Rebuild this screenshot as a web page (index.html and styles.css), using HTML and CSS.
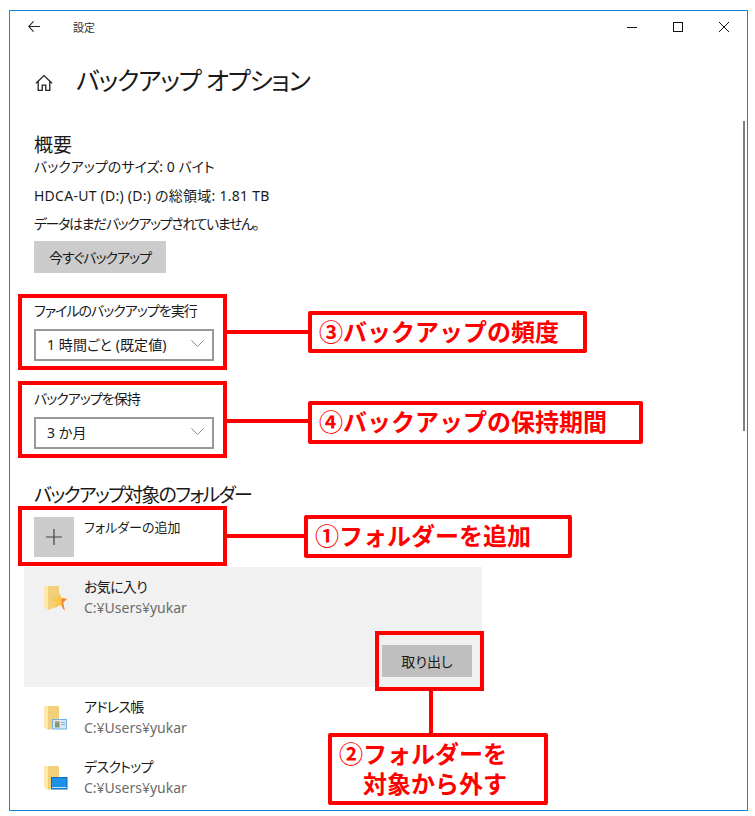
FILE: index.html
```html
<!DOCTYPE html>
<html lang="ja">
<head>
  <meta charset="UTF-8" />
  <title>バックアップ オプション</title>
  <link rel="stylesheet" href="styles.css">
</head>
<body>
  <div class="window">
    <!-- Title bar -->
    <div class="titlebar">
      <svg class="back-icon" width="12" height="11" viewBox="0 0 12 11"><path d="M5.500 .4 .8 5.500l4.700 5.100M1 5.500h11" fill="none" stroke="#222" stroke-width="1.1"/></svg>
      <span class="app-name">設定</span>
      <div class="win-controls">
        <svg width="12" height="12" viewBox="0 0 12 12"><path d="M1 6.500h10" stroke="#111" stroke-width="1"/></svg>
        <svg width="12" height="12" viewBox="0 0 12 12"><rect x="1.500" y="1.500" width="9" height="9" fill="none" stroke="#111" stroke-width="1"/></svg>
        <svg width="12" height="12" viewBox="0 0 12 12"><path d="M1 1l10 10M11 1 1 11" stroke="#111" stroke-width="1"/></svg>
      </div>
    </div>

    <div class="page-head">
      <svg class="home-icon" width="18" height="18" viewBox="0 0 18 18"><path d="M1 9.200 9 1.600l8 7.600M3.200 7.400v9h4v-5.200h3.600v5.200h4v-9" fill="none" stroke="#222" stroke-width="1.300"/></svg>
      <h1>バックアップ オプション</h1>
    </div>

    <div class="scrollbar"></div>

    <div class="content">
      <h2 class="overview-title">概要</h2>
      <p class="info">バックアップのサイズ: 0 バイト</p>
      <p class="info info-wide">HDCA-UT (D:) (D:) の総領域: 1.81 TB</p>
      <p class="info info-tight">データはまだバックアップされていません。</p>
      <button class="btn btn-now">今すぐバックアップ</button>

      <label class="field-label first">ファイルのバックアップを実行</label>
      <div class="select">
        <span>1 時間ごと (既定値)</span>
        <svg width="13" height="7" viewBox="0 0 13 7"><path d="M.4.4 6.500 6.400 12.600.4" fill="none" stroke="#888" stroke-width="1"/></svg>
      </div>

      <label class="field-label second">バックアップを保持</label>
      <div class="select">
        <span>3 か月</span>
        <svg width="13" height="7" viewBox="0 0 13 7"><path d="M.4.4 6.500 6.400 12.600.4" fill="none" stroke="#888" stroke-width="1"/></svg>
      </div>

      <h2 class="folders-title">バックアップ対象のフォルダー</h2>
      <div class="add-row">
        <div class="add-square">
          <svg width="16" height="16" viewBox="0 0 16 16"><path d="M8 0v16M0 8h16" stroke="#444" stroke-width="1.200"/></svg>
        </div>
        <span class="add-text">フォルダーの追加</span>
      </div>

      <div class="folder selected">
        <div class="folder-main">
          <svg class="folder-icon" width="26" height="28" viewBox="0 0 26 28">
            <path d="M0 1h14l1 1v19L4 25 0 22z" fill="#f2cf78"/>
            <path d="M0 1h4v24l-4-3z" fill="#fde9ad"/>
            <path d="M15.500 8l2.300 5.200 5.200.6-3.900 3.600 1.100 5.400-4.700-2.700-4.700 2.700 1.100-5.400L8 13.800l5.200-.6z" fill="#fcc746"/>
            <path d="M17.800 13.200l5.200.6-3.900 3.600 1.100 5.400.8 3-2.500-2.500-1-5.700z" fill="#ee8240"/>
          </svg>
          <div class="folder-text">
            <div class="folder-name">お気に入り</div>
            <div class="folder-path">C:¥Users¥yukar</div>
          </div>
        </div>
        <button class="btn btn-remove">取り出し</button>
      </div>

      <div class="folder">
        <div class="folder-main">
          <svg class="folder-icon" width="26" height="28" viewBox="0 0 26 28">
            <path d="M0 1h14l1 1v19L4 25 0 22z" fill="#f2cf78"/>
            <path d="M0 1h4v24l-4-3z" fill="#fde9ad"/>
            <rect x="8.500" y="14.500" width="14" height="9.500" fill="#d8e8f4" stroke="#6fb0de"/>
            <rect x="11" y="16.500" width="4.500" height="6" fill="#7f9a70"/>
            <circle cx="13.200" cy="17.800" r="1.400" fill="#c98a5a"/>
            <path d="M17 17.500h4M17 19.500h4" stroke="#8db6d6"/>
          </svg>
          <div class="folder-text">
            <div class="folder-name">アドレス帳</div>
            <div class="folder-path">C:¥Users¥yukar</div>
          </div>
        </div>
      </div>

      <div class="folder">
        <div class="folder-main">
          <svg class="folder-icon" width="26" height="28" viewBox="0 0 26 28">
            <path d="M0 1h14l1 1v19L4 25 0 22z" fill="#f2cf78"/>
            <path d="M0 1h4v24l-4-3z" fill="#fde9ad"/>
            <rect x="7.500" y="12.500" width="15.500" height="11.500" fill="#1e90e8" stroke="#0f6cb8"/>
            <path d="M8 22.500h14.500" stroke="#bfe0f8"/>
          </svg>
          <div class="folder-text">
            <div class="folder-name">デスクトップ</div>
            <div class="folder-path">C:¥Users¥yukar</div>
          </div>
        </div>
      </div>
    </div>
  </div>

  <!-- Red annotations drawn over the screenshot -->
  <div class="mark mark-freq"></div>
  <div class="mark mark-keep"></div>
  <div class="mark mark-add"></div>
  <div class="mark mark-remove"></div>

  <div class="wire wire-freq"></div>
  <div class="wire wire-keep"></div>
  <div class="wire wire-add"></div>
  <div class="wire wire-remove"></div>

  <div class="note note-freq">③バックアップの頻度</div>
  <div class="note note-keep">④バックアップの保持期間</div>
  <div class="note note-add">①フォルダーを追加</div>
  <div class="note note-remove">②フォルダーを<br>&emsp;対象から外す</div>
</body>
</html>
```

FILE: styles.css
```css
html, body {
  margin: 0;
  padding: 0;
  background: #fff;
  font-family: "Noto Sans", "Noto Sans CJK JP", sans-serif;
  font-feature-settings: "palt";
  color: #1a1a1a;
}
body {
  position: relative;
  width: 755px;
  height: 816px;
  overflow: hidden;
}
/* Settings window */
.window {
  position: relative;
  box-sizing: border-box;
  width: 739px;
  height: 801px;
  margin: 10px 0 0 9px;
  border: 1px solid #1a86d8;
  overflow: hidden;
}
.titlebar {
  display: flex;
  align-items: center;
  height: 31px;
  padding-left: 18px;
}
.back-icon {
  margin-right: 33px;
}
.app-name {
  font-size: 11px;
  color: #333;
}
.win-controls {
  display: flex;
  gap: 34px;
  margin-left: auto;
  margin-right: 17px;
}
.page-head {
  display: flex;
  align-items: center;
  height: 34px;
  margin-top: 20px;
  padding-left: 25px;
}
.home-icon {
  margin-top: 7px;
  margin-right: 23px;
}
h1 {
  margin: 0;
  font-size: 25px;
  font-weight: 400;
  letter-spacing: -1.2px;
}
.scrollbar {
  position: absolute;
  top: 110px;
  right: 2px;
  width: 2px;
  height: 310px;
  background: #808080;
}
.content {
  padding: 0 0 0 24px;
}
h2 {
  margin: 0;
  font-size: 19px;
  font-weight: 400;
}
.overview-title {
  margin-top: 35px;
  height: 28px;
  line-height: 28px;
}
.info {
  margin: 0;
  height: 28.500px;
  line-height: 28px;
  font-size: 14px;
}
.overview-title + .info {
  margin-top: -6px;
}
.info-wide {
  letter-spacing: .25px;
}
.info-tight {
  letter-spacing: -1.4px;
}
.btn {
  display: block;
  border: 0;
  font-family: inherit;
  font-feature-settings: inherit;
  font-size: 14px;
  color: #1a1a1a;
  height: 32px;
  padding: 0;
}
.btn-now {
  width: 132px;
  margin-top: 2px;
  background: #ccc;
  letter-spacing: -1px;
}
.field-label {
  display: block;
  font-size: 14px;
  line-height: 20px;
  letter-spacing: -1px;
}
.field-label.first {
  margin-top: 28px;
}
.field-label.second {
  margin-top: 28px;
}
.select {
  box-sizing: border-box;
  display: flex;
  align-items: center;
  justify-content: space-between;
  width: 180px;
  height: 32px;
  margin-top: 8px;
  padding: 0 8px 2px 11px;
  border: 2px solid #999;
  font-size: 14px;
  letter-spacing: .1px;
}
.folders-title {
  margin-top: 32px;
  height: 28px;
  line-height: 28px;
  letter-spacing: -1.7px;
}
.add-row {
  display: flex;
  margin-top: 8px;
}
.add-square {
  display: flex;
  align-items: center;
  justify-content: center;
  width: 40px;
  height: 40px;
  background: #ccc;
}
.add-text {
  margin-left: 10px;
  font-size: 13px;
  line-height: 20px;
}
/* Folder list */
.folder {
  width: 458px;
  height: 60px;
  margin-left: -10px;
}
.add-row + .folder {
  margin-top: 10px;
}
.folder.selected {
  position: relative;
  height: 120px;
  background: #f1f1f1;
}
.folder-main {
  display: flex;
  padding: 9px 0 0 20px;
}
.folder-icon {
  margin-top: 9px;
  flex: none;
}
.folder-text {
  margin-left: 14px;
}
.folder-name {
  font-size: 14px;
  line-height: 22px;
  letter-spacing: -.7px;
}
.folder-path {
  font-size: 14px;
  line-height: 20px;
  color: #6b6b6b;
}
.btn-remove {
  width: 90px;
  margin: 27px 0 0 358px;
  background: #bfbfbf;
}
/* Annotations */
.mark {
  position: absolute;
  box-sizing: border-box;
  border: 4px solid #f00;
}
.mark-freq {
  left: 18px;
  top: 294px;
  width: 209px;
  height: 76px;
}
.mark-keep {
  left: 18px;
  top: 381px;
  width: 209px;
  height: 77px;
}
.mark-add {
  left: 18px;
  top: 506px;
  width: 209px;
  height: 60px;
}
.mark-remove {
  left: 375px;
  top: 631px;
  width: 109px;
  height: 60px;
}
.wire {
  position: absolute;
  background: #f00;
}
.wire-freq {
  left: 227px;
  top: 330px;
  width: 81px;
  height: 4px;
}
.wire-keep {
  left: 227px;
  top: 419px;
  width: 81px;
  height: 4px;
}
.wire-add {
  left: 227px;
  top: 534px;
  width: 77px;
  height: 4px;
}
.wire-remove {
  left: 429px;
  top: 691px;
  width: 4px;
  height: 42px;
}
.note {
  position: absolute;
  box-sizing: border-box;
  border: 4px solid #f00;
  border-radius: 2px;
  background: #fff;
  color: #f00;
  font-size: 24px;
  font-weight: 700;
  font-feature-settings: normal;
  line-height: 30px;
  white-space: nowrap;
}
.note-freq {
  left: 308px;
  top: 311px;
  width: 279px;
  height: 42px;
  padding: 2px 0 0 7px;
}
.note-keep {
  left: 308px;
  top: 401px;
  width: 335px;
  height: 43px;
  padding: 2px 0 0 7px;
}
.note-add {
  left: 304px;
  top: 515px;
  width: 268px;
  height: 43px;
  padding: 2px 0 0 7px;
}
.note-remove {
  left: 328px;
  top: 733px;
  width: 220px;
  height: 72px;
  padding: 2px 0 0 7px;
}
```
